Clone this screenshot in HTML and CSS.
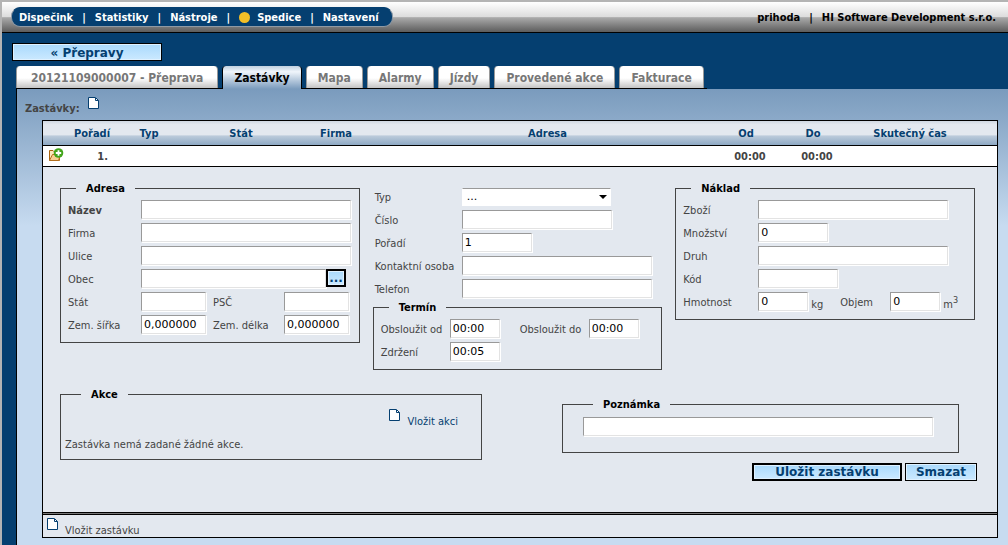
FILE: index.html
```html
<!DOCTYPE html>
<html lang="cs">
<head>
<meta charset="utf-8">
<title>Přeprava – Zastávky</title>
<link rel="stylesheet" href="styles.css">
</head>
<body>
<svg class="sprites" width="0" height="0" aria-hidden="true">
  <symbol id="page" viewBox="0 0 11 12">
    <path d="M.5.5H7.5L10.5 3.5V11.5H.5Z" fill="#fff" stroke="#053f70"/>
    <path d="M7.5 1V3.500H10.5" fill="none" stroke="#053f70"/>
  </symbol>
</svg>
<header class="topbar">
  <nav class="menu">
    <a href="#">Dispečink</a><span>|</span>
    <a href="#">Statistiky</a><span>|</span>
    <a href="#">Nástroje</a><span>|</span>
    <a href="#" class="current"><i class="dot"></i>Spedice</a><span>|</span>
    <a href="#">Nastavení</a>
  </nav>
  <div class="account"><span>prihoda</span><span>|</span><span>HI Software Development s.r.o.</span></div>
</header>
<main>
  <button type="button" class="btn wide back">« Přepravy</button>
  <nav class="tabs">
    <a href="#" class="lead">20121109000007 - Přeprava</a>
    <a href="#" class="active">Zastávky</a>
    <a href="#">Mapa</a>
    <a href="#">Alarmy</a>
    <a href="#">Jízdy</a>
    <a href="#">Provedené akce</a>
    <a href="#">Fakturace</a>
  </nav>
  <section class="panel">
    <h1 class="title">Zastávky: <a href="#" aria-label="Nová zastávka"><svg class="page"><use href="#page"/></svg></a></h1>
    <div class="stops">
      <table>
        <colgroup><col class="c-icon"><col class="c-order"><col class="c-type"><col class="c-state"><col class="c-firm"><col><col class="c-from"><col class="c-to"><col class="c-real"><col class="c-end"></colgroup>
        <thead>
          <tr><th></th><th>Pořadí</th><th>Typ</th><th>Stát</th><th>Firma</th><th>Adresa</th><th>Od</th><th>Do</th><th>Skutečný čas</th><th></th></tr>
        </thead>
        <tbody>
          <tr>
            <td class="open"><svg width="16" height="14" viewBox="0 0 16 14">
              <path d="M1.5 12.5V2.5H5L6.5 4H11.500V12.500Z" fill="#fbe7bd" stroke="#a8640f"/>
              <path d="M1.500 12.500 4.500 6.500H12.500L10.500 12.500Z" fill="#f6cf92" stroke="#b36f1e"/>
              <circle cx="10.500" cy="5" r="4.800" fill="#43a51c"/>
              <path d="M10.500 2.300V7.700M7.800 5H13.200" stroke="#fff" stroke-width="1.800"/>
            </svg></td>
            <td class="order">1.</td><td></td><td></td><td></td><td></td><td class="time">00:00</td><td class="time">00:00</td><td></td><td></td>
          </tr>
        </tbody>
      </table>
      <form class="detail">
        <div class="row-main">
          <fieldset>
            <legend>Adresa</legend>
            <div class="rows">
              <div class="row"><label class="l-a bold" for="nazev">Název</label><input class="w-210" id="nazev"></div>
              <div class="row"><label class="l-a" for="firma">Firma</label><input class="w-210" id="firma"></div>
              <div class="row"><label class="l-a" for="ulice">Ulice</label><input class="w-210" id="ulice"></div>
              <div class="row"><label class="l-a" for="obec">Obec</label><input class="w-185" id="obec"><button type="button" class="btn strong more">...</button></div>
              <div class="row"><label class="l-a" for="stat">Stát</label><input class="w-65" id="stat"><label class="l-b" for="psc">PSČ</label><input class="w-65" id="psc"></div>
              <div class="row"><label class="l-a" for="sirka">Zem. šířka</label><input class="w-65" id="sirka" value="0,000000"><label class="l-b" for="delka">Zem. délka</label><input class="w-65" id="delka" value="0,000000"></div>
            </div>
          </fieldset>
          <div class="middle">
            <div class="rows loose">
              <div class="row"><label class="l-c" for="typ">Typ</label><span class="select"><select id="typ"><option>...</option></select></span></div>
              <div class="row"><label class="l-c" for="cislo">Číslo</label><input class="w-150" id="cislo"></div>
              <div class="row"><label class="l-c" for="poradi">Pořadí</label><input class="w-70" id="poradi" value="1"></div>
              <div class="row"><label class="l-c" for="osoba">Kontaktní osoba</label><input class="w-190" id="osoba"></div>
              <div class="row"><label class="l-c" for="telefon">Telefon</label><input class="w-190" id="telefon"></div>
            </div>
            <fieldset>
              <legend>Termín</legend>
              <div class="rows">
                <div class="row"><label class="l-d" for="od">Obsloužit od</label><input class="w-50" id="od" value="00:00"><label class="l-e" for="do">Obsloužit do</label><input class="w-50" id="do" value="00:00"></div>
                <div class="row"><label class="l-d" for="zdrzeni">Zdržení</label><input class="w-50" id="zdrzeni" value="00:05"></div>
              </div>
            </fieldset>
          </div>
          <fieldset>
            <legend>Náklad</legend>
            <div class="rows">
              <div class="row"><label class="l-f" for="zbozi">Zboží</label><input class="w-190" id="zbozi"></div>
              <div class="row"><label class="l-f" for="mnozstvi">Množství</label><input class="w-70" id="mnozstvi" value="0"></div>
              <div class="row"><label class="l-f" for="druh">Druh</label><input class="w-190" id="druh"></div>
              <div class="row"><label class="l-f" for="kod">Kód</label><input class="w-80" id="kod"></div>
              <div class="row"><label class="l-f" for="hmotnost">Hmotnost</label><input class="w-50" id="hmotnost" value="0"><span class="unit">kg</span><label class="l-g" for="objem">Objem</label><input class="w-50" id="objem" value="0"><span class="unit">m<sup>3</sup></span></div>
            </div>
          </fieldset>
        </div>
        <div class="row-extra">
          <fieldset class="actions">
            <legend>Akce</legend>
            <a href="#" class="add"><svg class="page"><use href="#page"/></svg><span>Vložit akci</span></a>
            <p>Zastávka nemá zadané žádné akce.</p>
          </fieldset>
          <fieldset class="note">
            <legend>Poznámka</legend>
            <input aria-label="Poznámka">
          </fieldset>
        </div>
        <div class="buttons">
          <button type="button" class="btn strong wide">Uložit zastávku</button>
          <button type="button" class="btn delete">Smazat</button>
        </div>
      </form>
      <div class="foot"><a href="#" class="add"><svg class="page"><use href="#page"/></svg><span>Vložit zastávku</span></a></div>
    </div>
  </section>
</main>
</body>
</html>
```
FILE: styles.css
```css
* { box-sizing: border-box; }
body {
  margin: 0;
  min-height: 100vh;
  display: flex;
  flex-direction: column;
  border-top: 2px solid #b4b4b4;
  border-left: 2px solid #b4b4b4;
  background: #053f70;
  color: #444;
  font: 11px/15px "DejaVu Sans Condensed", "DejaVu Sans", sans-serif;
  font-stretch: condensed;
}
a { color: inherit; text-decoration: none; }
.sprites { position: absolute; }
.page { display: block; width: 11px; height: 12px; }

.topbar {
  display: flex;
  justify-content: space-between;
  align-items: center;
  height: 31px;
  padding: 0 12px 0 9px;
  border-bottom: 1px solid #000;
  background: linear-gradient(#fff 0, #dcdcdc 50%, #aaa 52%, #5c5c5c 100%);
  color: #000;
  font-weight: bold;
}
.menu {
  display: flex;
  align-items: center;
  gap: 9px;
  height: 20px;
  padding: 1px 13px 0 7px;
  border: 1px solid #8f9aa5;
  border-top-color: #053f70;
  border-radius: 9px;
  background: #053f70;
  color: #fff;
}
.current { display: flex; align-items: center; gap: 7px; }
.dot { width: 11px; height: 11px; border-radius: 50%; background: #f2bf27; }
.account { display: flex; gap: 9px; padding-top: 1px; }

main { flex: 1; display: flex; flex-direction: column; align-items: flex-start; padding: 10px 0 0 14px; }
.btn {
  height: 18px;
  padding: 1px 0 0;
  border: 1px solid #000;
  background: linear-gradient(#a9d9fc, #cbe9ff);
  box-shadow: inset 0 0 0 1px #dff1ff;
  color: #053f70;
  font: bold 12px/14px "DejaVu Sans", sans-serif;
}
.strong { padding: 0; border-width: 2px; }
.wide { width: 150px; }
.back { margin-left: -4px; }

.tabs { display: flex; gap: 4px; height: 23px; margin-top: 5px; padding-right: 3px; border-bottom: 1px solid #000; }
.tabs a {
  height: 22px;
  padding: 0 11px;
  border: 1px solid #999;
  border-width: 0 1px;
  border-radius: 4px 4px 0 0;
  background: linear-gradient(#fff 55%, #c4c4c4);
  color: #777;
  font-size: 12px;
  line-height: 25px;
  font-weight: bold;
}
.tabs .lead { padding: 0 14px; }
.tabs .active { position: relative; height: 23px; border-color: #000; background: linear-gradient(#c0d0e0, #f0f5fb 25%, #7a9bbd); color: #000; }

.panel {
  flex: 1;
  align-self: stretch;
  padding: 0 10px 7px 25px;
  border-left: 1px solid #000;
  background: linear-gradient(#7a9bbd, #c7dbf0 137px);
}
.title { display: flex; gap: 8px; height: 31px; margin: 0 0 0 -17px; padding-top: 12px; font-size: 11px; line-height: 16px; }
.title .page { margin-top: -4px; }

.stops { border: 1px solid #000; background: #e3e8ef; }
table { width: 100%; border-collapse: collapse; table-layout: fixed; font-weight: bold; }
th, td { padding: 0; border-bottom: 1px solid #000; }
th { height: 24px; padding-top: 1px; color: #053f70; }
thead tr { background: linear-gradient(#cfd8e2, #e3e8ef 15%, #e3e8ef 58%, #bccbdb 62%, #8ea9c4); }
td { height: 21px; padding-top: 2px; background: #fff; }
.c-icon { width: 27px; }
.c-order { width: 44px; }
.c-type { width: 70px; }
.c-state { width: 114px; }
.c-firm { width: 76px; }
.c-from { width: 50px; }
.c-to { width: 84px; }
.c-real { width: 110px; }
.c-end { width: 32px; }
.open { padding-left: 5px; vertical-align: top; }
.open svg { display: block; }
.order { padding-right: 6px; text-align: right; }
.time { padding-left: 8px; text-align: center; }

.detail { padding: 14px 18px 33px 17px; }
.row-main { display: grid; grid-template-columns: 300fr 290fr 300fr; align-items: start; column-gap: 13px; margin-right: 4px; }
fieldset { min-width: 0; margin: 0; padding: 4px 7px 8px; border: 1px solid #444; }
legend { height: 15px; margin-left: 8px; padding: 0 10px; color: #000; font-weight: bold; }
.rows { display: grid; gap: 4px; }
.row { display: flex; align-items: center; white-space: nowrap; }
.middle { padding-top: 7px; }
.loose { margin-bottom: 2px; padding-left: 2px; }
label { padding-top: 2px; }
.bold { font-weight: bold; }
.l-a { width: 73px; }
.l-b { width: 78px; padding-left: 7px; }
.l-c { width: 87px; }
.l-d { width: 69px; }
.l-e { width: 89px; padding-left: 20px; }
.l-f { width: 75px; }
.l-g { width: 63px; padding-left: 13px; }
.unit { width: 19px; height: 15px; padding: 3px 0 0 3px; }
.unit sup { font-size: 9px; line-height: 1px; }
input, select {
  height: 19px;
  padding: 0 2px;
  border: 1px solid;
  border-color: #999 #e3e3e3 #e3e3e3 #999;
  border-radius: 0;
  background: #fff;
  box-shadow: 1px 1px 0 #fff;
  color: #000;
  font: 11px/15px "DejaVu Sans", sans-serif;
}
.w-50 { width: 50px; }
.w-65 { width: 65px; }
.w-70 { width: 70px; }
.w-80 { width: 80px; }
.w-150 { width: 150px; }
.w-185 { width: 185px; }
.w-190 { width: 190px; }
.w-210 { width: 210px; }
.more { width: 20px; }
.select { position: relative; }
.select select { display: block; width: 149px; height: 18px; padding-left: 4px; appearance: none; border-color: #999 #fff #fff; box-shadow: none; }
.select::after {
  content: "";
  position: absolute;
  top: 7px;
  right: 4px;
  border: 4px solid transparent;
  border-top-color: #000;
  border-bottom: 0;
  pointer-events: none;
}

.row-extra { display: grid; grid-template-columns: 422fr 397fr; align-items: start; column-gap: 80px; margin: 17px 20px 0 0; }
.actions { padding: 7px 23px 7px 4px; }
.actions legend { margin-left: 16px; }
.add { display: flex; gap: 7px; width: max-content; }
.add span { padding-top: 5px; }
.actions .add { margin-left: auto; color: #053f70; }
.actions p { margin: 8px 0 0; }
.note { margin-top: 10px; padding: 5px 25px 16px 20px; }
.note legend { margin-left: 10px; }
.note input { display: block; width: 100%; }
.buttons { display: flex; justify-content: flex-end; gap: 3px; margin: 3px 2px 0 0; }
.delete { width: 72px; }
.foot { height: 23px; padding: 3px 4px 0; border-top: 1px solid #000; box-shadow: 0 -1px #777, 0 -2px #000; }
```
